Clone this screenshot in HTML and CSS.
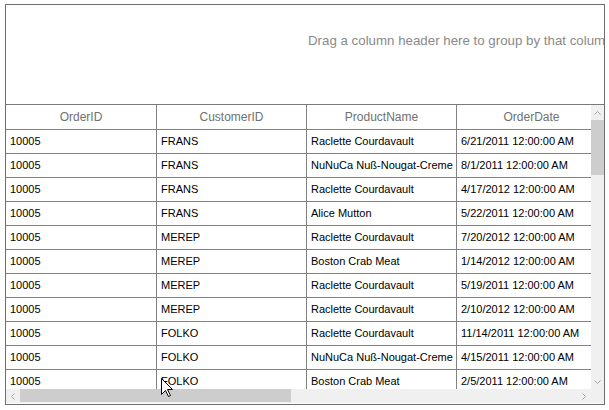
FILE: index.html
```html
<!DOCTYPE html>
<html>
<head>
<meta charset="utf-8">
<link rel="stylesheet" href="styles.css">
</head>
<body>
<div class="grid">
  <div class="group-panel"><span class="group-text">Drag a column header here to group by that column</span></div>
  <div class="body">
    <div class="viewport">
      <div class="row header">
        <div class="cell c1">OrderID</div>
        <div class="cell">CustomerID</div>
        <div class="cell">ProductName</div>
        <div class="cell">OrderDate</div>
      </div>
      <div class="row"><div class="cell c1">10005</div><div class="cell">FRANS</div><div class="cell">Raclette Courdavault</div><div class="cell">6/21/2011 12:00:00 AM</div></div>
      <div class="row"><div class="cell c1">10005</div><div class="cell">FRANS</div><div class="cell">NuNuCa Nuß-Nougat-Creme</div><div class="cell">8/1/2011 12:00:00 AM</div></div>
      <div class="row"><div class="cell c1">10005</div><div class="cell">FRANS</div><div class="cell">Raclette Courdavault</div><div class="cell">4/17/2012 12:00:00 AM</div></div>
      <div class="row"><div class="cell c1">10005</div><div class="cell">FRANS</div><div class="cell">Alice Mutton</div><div class="cell">5/22/2011 12:00:00 AM</div></div>
      <div class="row"><div class="cell c1">10005</div><div class="cell">MEREP</div><div class="cell">Raclette Courdavault</div><div class="cell">7/20/2012 12:00:00 AM</div></div>
      <div class="row"><div class="cell c1">10005</div><div class="cell">MEREP</div><div class="cell">Boston Crab Meat</div><div class="cell">1/14/2012 12:00:00 AM</div></div>
      <div class="row"><div class="cell c1">10005</div><div class="cell">MEREP</div><div class="cell">Raclette Courdavault</div><div class="cell">5/19/2011 12:00:00 AM</div></div>
      <div class="row"><div class="cell c1">10005</div><div class="cell">MEREP</div><div class="cell">Raclette Courdavault</div><div class="cell">2/10/2012 12:00:00 AM</div></div>
      <div class="row"><div class="cell c1">10005</div><div class="cell">FOLKO</div><div class="cell">Raclette Courdavault</div><div class="cell">11/14/2011 12:00:00 AM</div></div>
      <div class="row"><div class="cell c1">10005</div><div class="cell">FOLKO</div><div class="cell">NuNuCa Nuß-Nougat-Creme</div><div class="cell">4/15/2011 12:00:00 AM</div></div>
      <div class="row"><div class="cell c1">10005</div><div class="cell">FOLKO</div><div class="cell">Boston Crab Meat</div><div class="cell">2/5/2011 12:00:00 AM</div></div>
    </div>
    <div class="vscroll">
      <div class="arrow v-arrow"><svg width="7" height="4" viewBox="0 0 7 4"><path d="M0.5 3.5 L3.5 0.5 L6.5 3.5" fill="none" stroke="#a6a6a6" stroke-width="1"/></svg></div>
      <div class="vthumb"></div>
      <div class="vtrack"></div>
      <div class="arrow v-arrow"><svg width="7" height="4" viewBox="0 0 7 4"><path d="M0.5 0.5 L3.5 3.5 L6.5 0.5" fill="none" stroke="#a6a6a6" stroke-width="1"/></svg></div>
    </div>
    <div class="hscroll">
      <div class="arrow h-arrow"><svg width="4" height="7" viewBox="0 0 4 7"><path d="M3.5 0.5 L0.5 3.5 L3.5 6.5" fill="none" stroke="#a6a6a6" stroke-width="1"/></svg></div>
      <div class="hthumb"></div>
      <div class="htrack"></div>
      <div class="arrow h-arrow"><svg width="4" height="7" viewBox="0 0 4 7"><path d="M0.5 0.5 L3.5 3.5 L0.5 6.5" fill="none" stroke="#a6a6a6" stroke-width="1"/></svg></div>
    </div>
    <div class="corner"></div>
  </div>
  <svg class="cursor" width="13" height="20" viewBox="0 0 13 20"><path d="M0.5 0.5 L0.5 16.5 L4.5 12.5 L7.5 18.5 L9.5 17.5 L6.5 11.5 L11.5 11.5 Z" fill="#fff" stroke="#000" stroke-width="1" stroke-linejoin="miter"/></svg>
</div>
</body>
</html>
```

FILE: styles.css
```css
html, body {
  margin: 0;
  padding: 0;
  background: #ffffff;
}

body {
  font-family: "Liberation Sans", Arial, sans-serif;
}

.grid {
  position: relative;
  margin: 4px 0 0 5px;
  width: 600px;
  height: 401px;
  box-sizing: border-box;
  border: 1px solid #6e6e6e;
  display: flex;
  flex-direction: column;
  background: #ffffff;
}

.group-panel {
  flex: none;
  height: 100px;
  box-sizing: border-box;
  border-bottom: 1px solid #7a7a7a;
  overflow: hidden;
  white-space: nowrap;
  padding: 26px 0 0 302px;
}

.group-text {
  font-size: 13.3px;
  line-height: 16px;
  color: #8a8a8a;
}

.body {
  flex: 1;
  min-height: 0;
  display: grid;
  grid-template-columns: 585px 13px;
  grid-template-rows: 284px 14px;
}

.viewport {
  overflow: hidden;
  white-space: nowrap;
}

.row {
  display: flex;
  height: 24px;
  box-sizing: border-box;
  border-bottom: 1px solid #828282;
}

.row.header {
  height: 25px;
}

.cell {
  flex: none;
  width: 150px;
  box-sizing: border-box;
  border-right: 1px solid #828282;
  padding-left: 4px;
  font-size: 11px;
  line-height: 23px;
  color: #000000;
  overflow: hidden;
}

.cell.c1 {
  width: 151px;
  padding-left: 4px;
}

.header .cell {
  text-align: center;
  padding-left: 0;
  font-size: 12px;
  line-height: 24px;
  color: #707070;
}

.header .cell.c1 {
  padding-left: 0;
}

.vscroll {
  display: flex;
  flex-direction: column;
  background: #f0f0f0;
}

.arrow {
  flex: none;
  display: flex;
  align-items: center;
  justify-content: center;
}

.v-arrow {
  height: 15px;
}

.vthumb {
  flex: none;
  height: 55px;
  background: #cdcdcd;
}

.vtrack {
  flex: 1;
}

.hscroll {
  display: flex;
  background: #f0f0f0;
}

.h-arrow {
  width: 14px;
}

.hthumb {
  flex: none;
  width: 271px;
  background: #cdcdcd;
  margin-bottom: 1px;
}

.htrack {
  flex: 1;
}

.corner {
  background: #f0f0f0;
}

.cursor {
  position: absolute;
  left: 155px;
  top: 373px;
}
```
